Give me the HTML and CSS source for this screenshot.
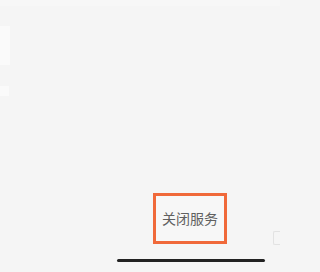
FILE: index.html
```html
<!DOCTYPE html>
<html lang="zh">
<head>
<meta charset="utf-8">
<link rel="stylesheet" href="styles.css">
</head>
<body>
<div class="screen">
  <div class="top-strip"></div>
  <div class="marks">
    <div class="mark mark-tall"></div>
    <div class="mark mark-short"></div>
  </div>
  <div class="spacer"></div>
  <div class="actions">
    <div class="close-btn">关闭服务</div>
    <div class="edge-icon"></div>
  </div>
  <div class="home-row">
    <div class="home-bar"></div>
  </div>
</div>
</body>
</html>
```
FILE: styles.css
```css
html, body {
  margin: 0;
  padding: 0;
  background: #f5f5f5;
  overflow: hidden;
}
.screen {
  width: 280px;
  height: 272px;
  display: flex;
  flex-direction: column;
  font-family: "Noto Sans CJK SC", "Noto Sans", sans-serif;
}
.top-strip {
  height: 6px;
  background: #f7f7f7;
}
.marks {
  display: flex;
  flex-direction: column;
  gap: 21px;
  padding-top: 20px;
}
.mark {
  background: #fafafa;
}
.mark-tall {
  width: 10px;
  height: 39px;
}
.mark-short {
  width: 9px;
  height: 10px;
}
.spacer {
  flex: 1;
}
.actions {
  display: flex;
  justify-content: flex-end;
  align-items: flex-end;
}
.close-btn {
  box-sizing: border-box;
  width: 74px;
  height: 51px;
  border: 3px solid #f0693a;
  background: #f7f7f7;
  color: #606060;
  font-size: 14px;
  display: flex;
  align-items: center;
  justify-content: center;
  margin-right: 46px;
  padding-bottom: 2px;
}
.edge-icon {
  box-sizing: border-box;
  width: 7px;
  height: 14px;
  margin-bottom: -1px;
  border: 1px solid #e2e2e2;
  border-right: none;
  border-radius: 2px 0 0 2px;
}
.home-row {
  display: flex;
  padding: 15px 0 10px 117px;
}
.home-bar {
  width: 148px;
  height: 3px;
  border-radius: 2px;
  background: #222;
}
```
